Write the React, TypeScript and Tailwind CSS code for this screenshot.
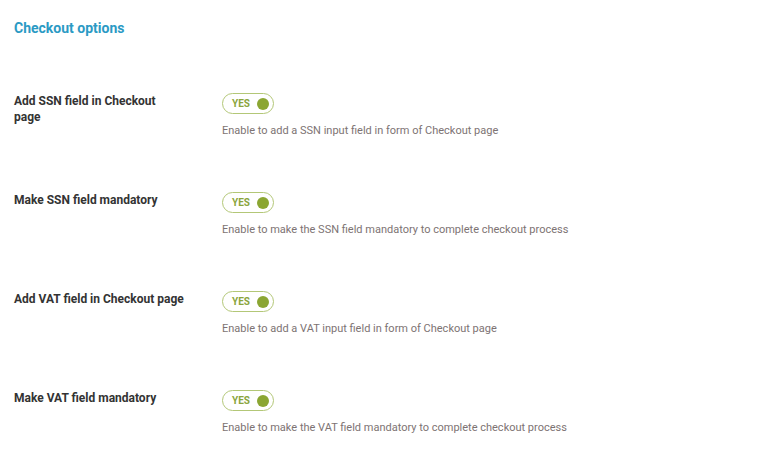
import React from "react";

const rows = [
  { label: "Add SSN field in Checkout page", desc: "Enable to add a SSN input field in form of Checkout page" },
  { label: "Make SSN field mandatory", desc: "Enable to make the SSN field mandatory to complete checkout process" },
  { label: "Add VAT field in Checkout page", desc: "Enable to add a VAT input field in form of Checkout page" },
  { label: "Make VAT field mandatory", desc: "Enable to make the VAT field mandatory to complete checkout process" },
];

function Toggle() {
  return (
    <div className="flex h-[21px] w-[52px] items-center justify-between rounded-full border-[1.5px] border-[#b3c777] bg-white pl-[9px] pr-[4px]">
      <span className="text-[10px] font-bold leading-none text-[#8aa53c]">YES</span>
      <span className="h-[12px] w-[12px] rounded-full bg-[#8ba632]" />
    </div>
  );
}

export default function App() {
  return (
    <div className="h-[452px] w-[769px] overflow-hidden bg-white pl-[14px] pt-[18px]" style={{ fontFamily: "Roboto, 'Liberation Sans', sans-serif" }}>
      <h2 className="text-[14px] font-bold leading-[20px] text-[#2b9ac4]">Checkout options</h2>
      <div className="mt-[55px] flex flex-col gap-[53px]">
        {rows.map((r) => (
          <div key={r.label} className="flex">
            <div className="w-[170px] shrink-0 text-[12px] font-bold leading-[16px] text-[#333333]">{r.label}</div>
            <div className="ml-[38px] flex flex-col">
              <Toggle />
              <div className="mt-[9px] text-[11px] leading-[16px] text-[#7d7373]">{r.desc}</div>
            </div>
          </div>
        ))}
      </div>
    </div>
  );
}
